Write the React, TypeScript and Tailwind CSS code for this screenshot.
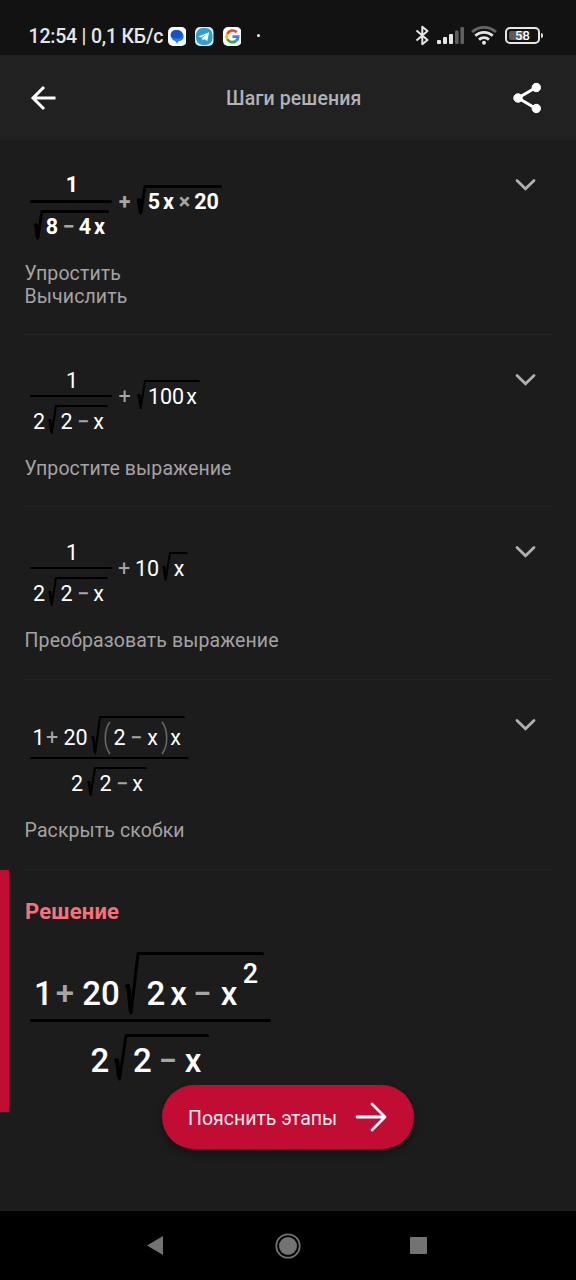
import type { ReactNode } from "react";

type P = { className?: string; children?: ReactNode };

/* One glyph group, centred in a cell of a set width */
function T({ className = "", children }: P) {
  return <span className={`flex shrink-0 justify-center whitespace-nowrap ${className}`}>{children}</span>;
}

function Op({ className = "", children }: P) {
  return <T className={`text-[#a6a6a6] ${className}`}>{children}</T>;
}

function Hook({ w, h, s }: { w: number; h: number; s: number }) {
  const knee = h - (h > 50 ? 28 : h > 45 ? 20 : h > 35 ? 17 : 14);
  return (
    <svg width={w} height={h} viewBox={`0 0 ${w} ${h}`} className="shrink-0 overflow-visible" fill="none" stroke="#000">
      <path d={`M0.5 ${knee + 1}L${w * 0.25} ${knee}L${w * 0.44} ${h - 2}`} strokeWidth={s * 1.3} strokeLinejoin="round" />
      <path d={`M${w * 0.46} ${h - 1}L${w} ${s / 2}`} strokeWidth={s} strokeLinecap="round" />
    </svg>
  );
}

function Sqrt({ w = 8, h = 29, s = 2, className = "", body, children }: P & { w?: number; h?: number; s?: number; body: string }) {
  return (
    <div className={`flex shrink-0 items-start ${className}`}>
      <Hook w={w} h={h} s={s} />
      <div className={`flex shrink-0 rounded-r-[2px] border-black ${body}`}>{children}</div>
    </div>
  );
}

function TwoMinusX() {
  return (
    <Sqrt body="w-[52px] border-t-2 leading-[29px]">
      <T className="w-[21px]">2</T>
      <Op className="w-[12px] font-medium">−</Op>
      <T className="w-[19px]">x</T>
    </Sqrt>
  );
}

function OneOverRoot() {
  return (
    <div className="w-[82px] shrink-0">
      <T className="pl-[2px] leading-[29px]">1</T>
      <div className="h-[2px] rounded bg-black" />
      <div className="mt-[8px] flex">
        <T className="w-[18px] leading-[33px]">2</T>
        <TwoMinusX />
      </div>
    </div>
  );
}

function Paren({ flip = false }: { flip?: boolean }) {
  return (
    <svg width="7" height="34" viewBox="0 0 7 34" className={`mt-[3px] shrink-0 ${flip ? "-scale-x-100" : ""}`} fill="none" stroke="#666" strokeWidth="1.6">
      <path d="M6 1C-0.3 9 -0.3 25 6 33" />
    </svg>
  );
}

function Step({ height, formula, label, bold = false, area = "h-[91px]" }: { height: string; formula: ReactNode; label: ReactNode; bold?: boolean; area?: string }) {
  return (
    <section className={`mx-6 flex justify-between border-b border-[#242424] pt-[31px] ${height}`}>
      <div>
        <div className={`flex items-start pl-[6px] text-[21.5px] text-white ${area} ${bold ? "font-bold" : ""}`}>{formula}</div>
        <p className="pl-[0.6px] text-[19.5px] leading-[23px] tracking-[0.1px] text-[#a3a3a3]">{label}</p>
      </div>
      <svg width="20" height="14" viewBox="0 0 20 14" className="mt-[7px] mr-[17px] shrink-0 overflow-visible" fill="none" stroke="#b0b0b0" strokeWidth="2.8" strokeLinecap="round">
        <path d="M2 2.5L10.5 10.8L19 2.5" />
      </svg>
    </section>
  );
}

function StatusBar() {
  return (
    <div className="flex h-[55px] items-center bg-[#121212] pt-[17px] pr-[33px] pl-[28.5px] text-[#e6e6e6]">
      <span className="w-[139px] shrink-0 pt-px text-[19.5px] font-medium tracking-[-0.2px] whitespace-nowrap">12:54 | 0,1 КБ/с</span>
      <div className="flex gap-[9px]">
        <svg width="18.5" height="19" viewBox="0 0 18.5 19">
          <rect width="18.5" height="19" rx="5" fill="#fafcff" />
          <rect x="2.6" y="3" width="12" height="10" rx="5" fill="#1551c4" />
          <path d="M9 4.5h2a4.7 4.7 0 014.7 5c0 3-2.5 4.6-5 4.6l-1.6 2.4-2-2.6a4.5 4.5 0 01-3.6-3z" fill="#2c7bf2" />
          <rect x="3.8" y="4" width="10.6" height="7.6" rx="3.8" fill="#1453c8" />
        </svg>
        <svg width="18.5" height="19" viewBox="0 0 18.5 19">
          <rect width="18.5" height="19" rx="5" fill="#dceff8" />
          <rect x="1" y="1" width="16.5" height="17" rx="7" fill="#2f9fd0" />
          <path d="M3.5 9.5L14.2 5.2L12.2 14L9.2 12L7.6 13.6L7.2 11L12 7L6 10.5Z" fill="#fff" />
        </svg>
        <svg width="18.5" height="19" viewBox="0 0 18.5 19">
          <rect width="18.5" height="19" rx="5" fill="#fafafa" />
          <g fill="none" strokeWidth="2.7">
            <path d="M13.6 5.2A5.8 5.8 0 004.3 6.8" stroke="#e34a3c" />
            <path d="M4.3 6.8A5.8 5.8 0 004.3 12.2" stroke="#f3b90c" />
            <path d="M4.3 12.2A5.8 5.8 0 0013 13.9" stroke="#37a553" />
            <path d="M13 13.9A5.8 5.8 0 0015.2 9.6H9.5" stroke="#4080ee" />
          </g>
        </svg>
      </div>
      <span className="ml-[15.5px] mb-[2px] size-[3px] rounded-full bg-[#eee]" />
      <div className="mb-px ml-auto flex items-center">
        <svg width="15" height="21" viewBox="0 0 15 21" fill="none" stroke="#e6e6e6" strokeWidth="2">
          <path d="M1.5 5.5L12.5 15L7.3 19.2V1.8L12.5 6L1.5 15.5" strokeLinejoin="round" />
        </svg>
        <svg width="27" height="17" viewBox="0 0 27 17" className="ml-[7px]" fill="#e6e6e6">
          <rect y="13" width="4" height="4" rx="1" />
          <rect x="6" y="10" width="4" height="7" rx="1" />
          <rect x="12" y="7" width="4" height="10" rx="1" />
          <rect x="18" y="3.5" width="3.6" height="13.5" rx="1" fill="#5f5f5f" />
          <rect x="23.4" y="0" width="3.6" height="17" rx="1" fill="#5f5f5f" />
        </svg>
        <svg width="26" height="19" viewBox="0 0 26 19" className="ml-[7px]" fill="none" strokeWidth="2.8">
          <path d="M1 6A18 18 0 0125 6" stroke="#666" />
          <path d="M4.3 9.8A12.5 12.5 0 0121.7 9.8" stroke="#e6e6e6" />
          <path d="M8 13.6A7.5 7.5 0 0118 13.6" stroke="#e6e6e6" />
          <circle cx="13" cy="16.8" r="2" fill="#e6e6e6" />
        </svg>
        <div className="ml-[8px] flex h-[17px] w-[35px] items-center rounded-[5px] border-2 border-[#e6e6e6] p-[2px]">
          <div className="flex h-full w-[16px] items-center rounded-l-[2px] bg-[#5b5b5b] pt-px pl-[6px] text-[13px] font-medium text-white">58</div>
        </div>
        <div className="ml-[1px] h-[5px] w-[2px] rounded-r bg-[#ddd]" />
      </div>
    </div>
  );
}

export default function App() {
  return (
    <div className="relative flex h-[1280px] w-[576px] flex-col overflow-hidden bg-[#1c1c1c] font-[Roboto,sans-serif]">
      <StatusBar />
      <header className="flex h-[85px] shrink-0 items-center bg-[#212121] pl-[30px]">
        <svg width="28" height="26" viewBox="0 0 28 26" className="shrink-0" fill="none" stroke="#fff" strokeWidth="3">
          <path d="M25.5 13H3M14 2L3 13L14 24" />
        </svg>
        <h1 className="ml-[168px] w-[286px] pt-[2px] text-[19.5px] font-medium tracking-[0.1px] text-[#b0b3b7]">Шаги решения</h1>
        <svg width="31" height="32" viewBox="0 0 31 32" className="mt-px shrink-0" fill="#fff" stroke="#fff">
          <path d="M24 5.5L6 16L24 26.5" fill="none" strokeWidth="3" />
          <circle cx="24.3" cy="5.5" r="4.2" />
          <circle cx="6" cy="16" r="4.2" />
          <circle cx="24.3" cy="26.5" r="4.2" />
        </svg>
      </header>
      <main className="flex h-[1071px] shrink-0 flex-col">
        <Step
          height="h-[195px]"
          bold
          label={<>Упростить<br />Вычислить</>}
          formula={
            <>
              <div className="w-[82px] shrink-0">
                <T className="pl-[2px] leading-[28px]">1</T>
                <div className="mt-[1px] h-[3px] rounded bg-black" />
                <Sqrt className="mt-[7px] ml-[4px]" s={3} body="w-[67px] border-t-3 leading-[27px]">
                  <T className="w-[20px]">8</T>
                  <Op className="w-[13px]">−</Op>
                  <T className="w-[20px]">4</T>
                  <T className="w-[9px]">x</T>
                </Sqrt>
              </div>
              <Op className="mt-[16px] w-[25px] leading-[29px]">+</Op>
              <Sqrt className="mt-[14px]" s={3} body="w-[77px] border-t-3 leading-[27px]">
                <T className="w-[18px]">5</T>
                <T className="w-[11px]">x</T>
                <Op className="w-[21px]">×</Op>
                <T className="w-[23px]">20</T>
              </Sqrt>
            </>
          }
        />
        <Step
          height="h-[172px]"
          label="Упростите выражение"
          formula={
            <>
              <OneOverRoot />
              <Op className="mt-[16px] w-[25px] leading-[30px]">+</Op>
              <Sqrt className="mt-[14px]" body="w-[55px] border-t-2 leading-[29px]">
                <T className="w-[42px]">100</T>
                <T className="w-[9px]">x</T>
              </Sqrt>
            </>
          }
        />
        <Step
          height="h-[173px]"
          label="Преобразовать выражение"
          formula={
            <>
              <OneOverRoot />
              <Op className="mt-[16px] w-[24px] leading-[30px]">+</Op>
              <T className="mt-[16px] mr-[4px] w-[22px] leading-[29px]">10</T>
              <Sqrt className="mt-[14px]" body="w-[18px] border-t-2 leading-[29px]">
                <T className="w-[18px]">x</T>
              </Sqrt>
            </>
          }
        />
        <Step
          height="h-[190px]"
          area="h-[108px]"
          label="Раскрыть скобки"
          formula={
            <div className="w-[159px]">
              <div className="flex h-[46px] items-start leading-[53px]">
                <T className="w-[17px]">1</T>
                <Op className="w-[10px]">+</Op>
                <T className="mr-[2px] ml-[5px] w-[27px]">20</T>
                <Sqrt className="mt-[5px]" w={9} h={38} body="w-[85px] border-t-2 pl-[4px] leading-[39px]">
                  <Paren />
                  <T className="w-[17px]">2</T>
                  <Op className="w-[16px] font-medium">−</Op>
                  <T className="w-[17px]">x</T>
                  <Paren flip />
                  <T className="w-[15px]">x</T>
                </Sqrt>
              </div>
              <div className="h-[2px] rounded bg-black" />
              <div className="mt-[8px] flex pl-[37px]">
                <T className="w-[20px] leading-[33px]">2</T>
                <TwoMinusX />
              </div>
            </div>
          }
        />
        <section className="h-[242px] border-l-[9px] border-[#c10c34] pt-[29px] pl-[16px]">
          <h2 className="text-[22px] leading-[26px] font-bold tracking-[0.2px] text-[#f87179]">Решение</h2>
          <div className="mt-[25px] ml-[5px] w-[241px] text-[33px] font-medium text-white">
            <div className="flex h-[69px] items-start leading-[87px]">
              <T className="w-[25px] pl-[2px]">1</T>
              <Op className="w-[20px]">+</Op>
              <T className="mr-[5px] w-[45px] pl-[7px]">20</T>
              <Sqrt className="mt-[2px]" w={13} h={62} s={3} body="w-[126px] border-t-3 leading-[77px]">
                <T className="w-[36px]">2</T>
                <T className="w-[9px]">x</T>
                <Op className="w-[39px]">−</Op>
                <T className="w-[14px]">x</T>
                <T className="w-[28px] pl-px text-[27px] leading-[39px]">2</T>
              </Sqrt>
            </div>
            <div className="h-[3px] rounded bg-black" />
            <div className="mt-[12px] flex pl-[56px]">
              <T className="w-[28px] leading-[53px]">2</T>
              <Sqrt w={12} h={46} s={3} body="w-[83px] border-t-3 leading-[47px]">
                <T className="w-[33px]">2</T>
                <Op className="w-[18px]">−</Op>
                <T className="w-[32px]">x</T>
              </Sqrt>
            </div>
          </div>
        </section>
      </main>
      <button className="absolute top-[1085px] left-[162px] flex h-[64px] w-[252px] items-center justify-between rounded-full bg-[#c10c34] pr-[27px] pl-[26px] text-[19.5px] text-[#fbe9ed] shadow-[0_4px_8px_rgba(0,0,0,0.35)]">
        <span className="pt-[3px] whitespace-nowrap">Пояснить этапы</span>
        <svg width="32" height="30" viewBox="0 0 32 30" fill="none" stroke="#fff" strokeWidth="2.8" strokeLinecap="round" strokeLinejoin="round">
          <path d="M2 15H30M17 2L30 15L17 28" />
        </svg>
      </button>
      <nav className="flex h-[69px] shrink-0 items-center bg-black pl-[147px]">
        <svg width="16" height="19" viewBox="0 0 16 19" fill="#737373">
          <path d="M0 9.5L16 0V19Z" />
        </svg>
        <svg width="26" height="26" viewBox="0 0 26 26" className="ml-[112px]">
          <circle cx="13" cy="13" r="11.7" fill="none" stroke="#737373" strokeWidth="1.8" />
          <circle cx="13" cy="13" r="9" fill="#737373" />
        </svg>
        <div className="ml-[109px] size-[17px] rounded-[1px] bg-[#737373]" />
      </nav>
    </div>
  );
}
